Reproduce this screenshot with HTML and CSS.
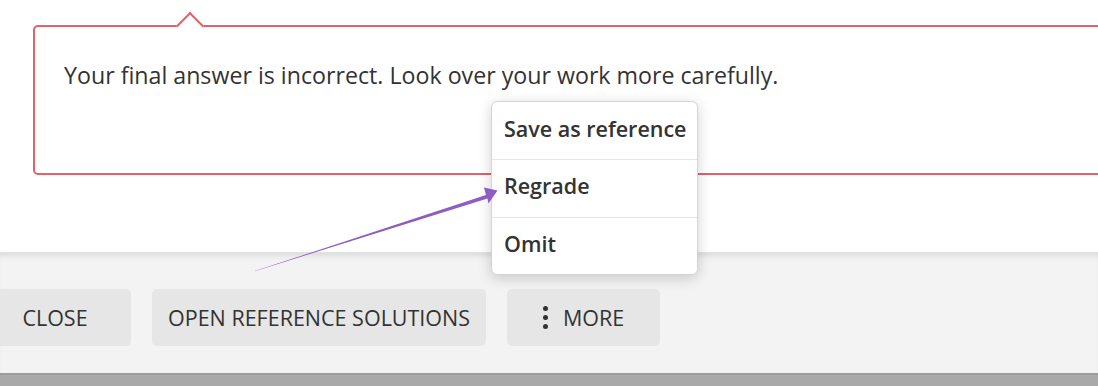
FILE: index.html
```html
<!DOCTYPE html>
<html>
<head>
<meta charset="utf-8">
<link rel="stylesheet" href="styles.css">
</head>
<body>
<div class="page">
  <section class="content">
    <div class="feedback">
      <span class="notch"></span>
      <p class="message">Your final answer is incorrect. Look over your work more carefully.</p>
    </div>
  </section>
  <footer class="footer">
    <div class="actions">
      <button class="btn btn-close">CLOSE</button>
      <button class="btn">OPEN REFERENCE SOLUTIONS</button>
      <button class="btn btn-more"><span class="dots"><i></i><i></i><i></i></span>MORE</button>
    </div>
  </footer>
  <div class="bottom-band"></div>

  <ul class="menu">
    <li class="menu-item">Save as reference</li>
    <li class="menu-item">Regrade</li>
    <li class="menu-item">Omit</li>
  </ul>

  <svg class="arrow" width="1098" height="386" viewBox="0 0 1098 386">
    <polygon points="252,272 486,195 484,187.5 497.5,190.5 488.5,203.5 487.5,198.5" fill="#8e5cc2"/>
  </svg>
</div>
</body>
</html>
```

FILE: styles.css
```css
html, body {
  margin: 0;
  padding: 0;
}
body {
  width: 1098px;
  height: 386px;
  overflow: hidden;
  background: #ffffff;
  font-family: "Open Sans", "Noto Sans", sans-serif;
  color: #333333;
}
.page {
  position: relative;
  width: 1098px;
  height: 386px;
  display: flex;
  flex-direction: column;
}
.content {
  height: 252px;
  padding-top: 25px;
  padding-left: 33px;
  box-sizing: border-box;
  background: #ffffff;
}
.feedback {
  position: relative;
  width: 1100px;
  height: 150px;
  box-sizing: border-box;
  border: 2px solid #e0626a;
  border-radius: 5px;
  background: #ffffff;
}
.notch {
  position: absolute;
  left: 145px;
  top: -11px;
  width: 18px;
  height: 18px;
  background: #ffffff;
  border-left: 2px solid #e0626a;
  border-top: 2px solid #e0626a;
  transform: rotate(45deg);
}
.message {
  margin: 0;
  padding: 33px 0 0 29px;
  font-size: 23.2px;
  line-height: 30px;
  color: #333333;
}
.footer {
  height: 121px;
  background: #f3f3f3;
  box-shadow: inset 0 6px 6px -4px rgba(0,0,0,0.12);
  border-top: 1px solid #e2e2e2;
  box-sizing: border-box;
}
.actions {
  display: flex;
  gap: 21px;
  padding-top: 36px;
  margin-left: -21px;
}
.btn {
  height: 57px;
  min-width: 152px;
  padding: 0 16px;
  border: none;
  border-radius: 5px;
  background: #e6e6e6;
  font-family: "Open Sans", "Noto Sans", sans-serif;
  font-size: 21.5px;
  color: #333333;
  display: flex;
  align-items: center;
  justify-content: center;
  gap: 15px;
  padding-bottom: 1px;
}
.btn-more {
  min-width: 153px;
}
.dots {
  display: flex;
  flex-direction: column;
  gap: 4px;
  align-items: center;
}
.dots i {
  display: block;
  width: 5px;
  height: 5px;
  border-radius: 50%;
  background: #333333;
}
.bottom-band {
  flex: 1;
  background: #a9a9a9;
  border-top: 2px solid #9c9c9c;
}
.menu {
  position: absolute;
  left: 491px;
  top: 101px;
  width: 207px;
  margin: 0;
  padding: 0;
  list-style: none;
  background: #ffffff;
  border: 1px solid #d4d4d4;
  border-radius: 6px;
  box-sizing: border-box;
  box-shadow: 0 3px 14px rgba(0,0,0,0.18);
}
.menu-item {
  height: 57.5px;
  display: flex;
  align-items: center;
  padding-left: 12px;
  font-size: 21.5px;
  font-weight: 600;
  color: #333333;
  border-top: 1px solid #e6e6e6;
  box-sizing: border-box;
  padding-bottom: 5px;
}
.menu-item:first-child {
  border-top: none;
  height: 57px;
}
.arrow {
  position: absolute;
  left: 0;
  top: 0;
  pointer-events: none;
}
```
